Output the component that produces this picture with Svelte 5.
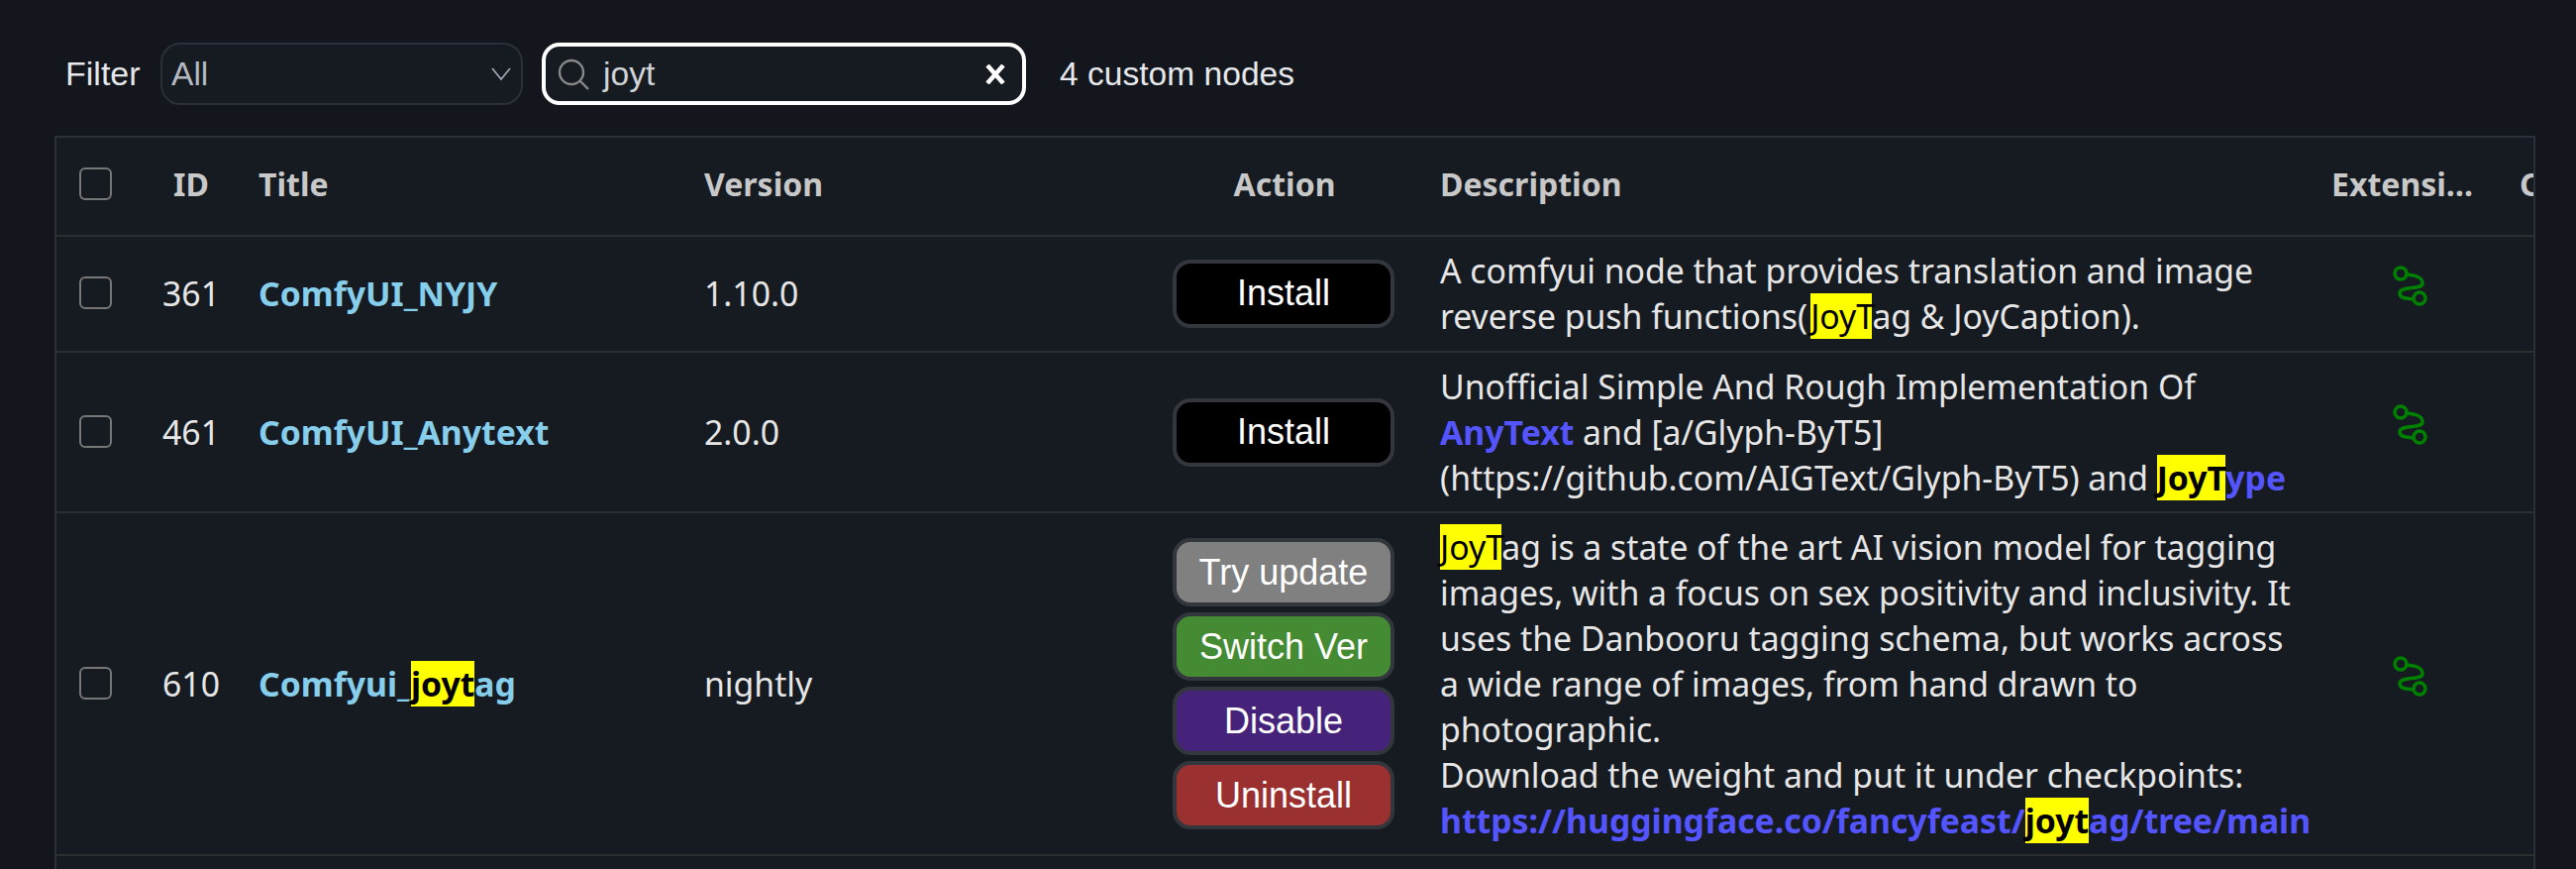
<script>
  const buttons = [
    ['Try update', 'gray'],
    ['Switch Ver', 'green'],
    ['Disable', 'purple'],
    ['Uninstall', 'red']
  ];
</script>

{#snippet flow()}
  <svg class="flow" viewBox="0 0 48 48" aria-hidden="true">
    <circle cx="14" cy="12" r="6" />
    <circle cx="33" cy="37" r="6" />
    <path d="M20 13C28 14 36 15 36 22C36 29 13 24 13 32C13 38 22 37 27 38" />
  </svg>
{/snippet}

{#snippet check()}
  <span class="check"></span>
{/snippet}

<div class="page">
  <div class="toolbar">
    <span class="filter-label">Filter</span>
    <div class="select">
      <span>All</span>
      <svg class="chevron" viewBox="0 0 20 13" aria-hidden="true"><path d="M1 1L10 12L19 1" /></svg>
    </div>
    <div class="search">
      <svg class="glass" viewBox="0 0 32 32" aria-hidden="true"><circle cx="14" cy="14" r="12" /><path d="M23 23L31 31" /></svg>
      <span class="query">joyt</span>
      <svg class="clear" viewBox="0 0 20 20" aria-hidden="true"><path d="M2 1L18 19M18 1L2 19" /></svg>
    </div>
    <span class="count">4 custom nodes</span>
  </div>

  <div class="wrap">
    <table>
      <colgroup>
        <col class="c-check" /><col class="c-id" /><col class="c-title" /><col class="c-version" />
        <col class="c-action" /><col class="c-desc" /><col class="c-ext" /><col class="c-last" />
      </colgroup>
      <thead>
        <tr>
          <th class="center">{@render check()}</th>
          <th class="center">ID</th>
          <th class="pad">Title</th>
          <th class="pad">Version</th>
          <th class="center">Action</th>
          <th class="desc">Description</th>
          <th class="ext-head">Extensions</th>
          <th class="last">Conflicts</th>
        </tr>
      </thead>
      <tbody>
        <tr>
          <td class="center">{@render check()}</td>
          <td class="center">361</td>
          <td class="pad title">ComfyUI_NYJY</td>
          <td class="pad">1.10.0</td>
          <td><div class="actions"><span class="btn black">Install</span></div></td>
          <td class="desc">A comfyui node that provides translation and image reverse push functions(<mark>JoyT</mark>ag &amp; JoyCaption).</td>
          <td class="center">{@render flow()}</td>
          <td></td>
        </tr>
        <tr>
          <td class="center">{@render check()}</td>
          <td class="center">461</td>
          <td class="pad title">ComfyUI_Anytext</td>
          <td class="pad">2.0.0</td>
          <td><div class="actions"><span class="btn black">Install</span></div></td>
          <td class="desc">Unofficial Simple And Rough Implementation Of <b class="link">AnyText</b> and [a/Glyph-ByT5](https://github.com/AIGText/Glyph-ByT5) and <b class="link"><mark>JoyT</mark>ype</b></td>
          <td class="center">{@render flow()}</td>
          <td></td>
        </tr>
        <tr>
          <td class="center">{@render check()}</td>
          <td class="center">610</td>
          <td class="pad title">Comfyui_<mark>joyt</mark>ag</td>
          <td class="pad">nightly</td>
          <td>
            <div class="actions">
              {#each buttons as [label, tone]}
                <span class="btn {tone}">{label}</span>
              {/each}
            </div>
          </td>
          <td class="desc"><mark>JoyT</mark>ag is a state of the art AI vision model for tagging images, with a focus on sex positivity and inclusivity. It uses the Danbooru tagging schema, but works across a&nbsp;wide range of images, from hand drawn to photographic.<br />Download the weight and put it under checkpoints: <b class="link">https://huggingface.co/fancyfeast/<mark>joyt</mark>ag/tree/main</b></td>
          <td class="center">{@render flow()}</td>
          <td></td>
        </tr>
        <tr class="spacer"><td colspan="8"></td></tr>
      </tbody>
    </table>
  </div>
</div>

<style>
  :global(body) {
    margin: 0;
    background: #13161c;
    overflow: hidden;
  }
  .page {
    height: 877px;
    overflow: hidden;
    box-sizing: border-box;
    padding: 43px 41px 0 55px;
    font-family: "Noto Sans", sans-serif;
  }
  .toolbar {
    display: flex;
    align-items: center;
    height: 63px;
    padding-left: 11px;
    font-family: "Liberation Sans", sans-serif;
    font-size: 33.6px;
    color: #e5e7eb;
  }
  .filter-label {
    width: 96px;
    font-size: 34px;
  }
  .select {
    width: 366px;
    height: 63px;
    box-sizing: border-box;
    display: flex;
    align-items: center;
    justify-content: space-between;
    padding: 0 10px 0 9px;
    background: #161b22;
    border: 2px solid #2b2f37;
    border-radius: 20px;
    color: #b4b8c0;
  }
  .chevron {
    width: 20px;
    height: 13px;
    fill: none;
    stroke: #a9adb6;
    stroke-width: 1.6;
  }
  .search {
    width: 489px;
    height: 63px;
    margin-left: 19px;
    box-sizing: border-box;
    display: flex;
    align-items: center;
    padding: 0 17px 0 12px;
    background: #161b22;
    border: 4px solid #fff;
    border-radius: 18px;
    color: #d0d3d8;
  }
  .glass {
    width: 32px;
    height: 32px;
    fill: none;
    stroke: #888;
    stroke-width: 2.4;
  }
  .query {
    margin-left: 14px;
    flex: 1;
  }
  .clear {
    width: 20px;
    height: 20px;
    fill: none;
    stroke: #fff;
    stroke-width: 4.5;
  }
  .count {
    margin-left: 34px;
  }
  .wrap {
    margin-top: 31px;
    height: 900px;
    overflow: hidden;
    box-sizing: border-box;
    border: 2px solid #2b2f37;
    border-bottom: 0;
    background: #161b22;
  }
  table {
    table-layout: fixed;
    width: 2620px;
    border-collapse: separate;
    border-spacing: 0;
    font-size: 33.75px;
    line-height: 46px;
    color: #e6e6e6;
  }
  .c-check { width: 78px; }
  .c-id { width: 114px; }
  .c-title { width: 450px; }
  .c-version { width: 476px; }
  .c-action { width: 242px; }
  .c-desc { width: 927px; }
  .c-ext { width: 178px; }
  .c-last { width: 155px; }
  .spacer td {
    height: 200px;
    border: 0;
  }
  th {
    height: 94px;
    padding: 0 0 4px;
    box-sizing: content-box;
    text-align: left;
    font-size: 32px;
    font-weight: 700;
    color: #c8c8c8;
    white-space: nowrap;
    overflow: hidden;
    border-bottom: 2px solid #2d2e30;
  }
  td {
    padding: 11px 0;
    border-bottom: 2px solid #2d2e30;
  }
  tbody tr:first-child td {
    padding-bottom: 12px;
  }
  .center {
    text-align: center;
    padding-left: 2px;
  }
  .pad {
    padding-left: 12px;
  }
  .desc {
    padding-left: 37px;
    padding-right: 10px;
  }
  .ext-head {
    padding: 0 18px 4px 10px;
    text-overflow: ellipsis;
  }
  .last {
    padding-left: 22px;
  }
  .title {
    color: #87ceeb;
    font-weight: 700;
  }
  mark {
    background: #ff0;
    color: #000;
  }
  .link {
    color: #5555ff;
    font-weight: 700;
  }
  .check {
    display: block;
    margin: 0 auto 2px;
    width: 33px;
    height: 33px;
    box-sizing: border-box;
    border: 2.5px solid #777;
    border-radius: 6px;
    position: relative;
    left: -1px;
  }
  .actions {
    display: flex;
    flex-direction: column;
    align-items: center;
    gap: 6px;
  }
  .btn {
    width: 224px;
    height: 69px;
    box-sizing: border-box;
    display: flex;
    align-items: center;
    justify-content: center;
    border: 4px solid #33363c;
    border-radius: 18px;
    color: #fff;
    font-family: "Liberation Sans", sans-serif;
    font-size: 36px;
  }
  .black { background: #000; }
  .gray { background: #808080; }
  .green { background: #458b33; }
  .purple { background: #46237a; }
  .red { background: #9a3030; }
  .flow {
    display: inline-block;
    vertical-align: middle;
    width: 48px;
    height: 48px;
    margin-bottom: 17px;
    fill: none;
    stroke: #008000;
    stroke-width: 3.5;
    stroke-linecap: round;
  }
</style>
